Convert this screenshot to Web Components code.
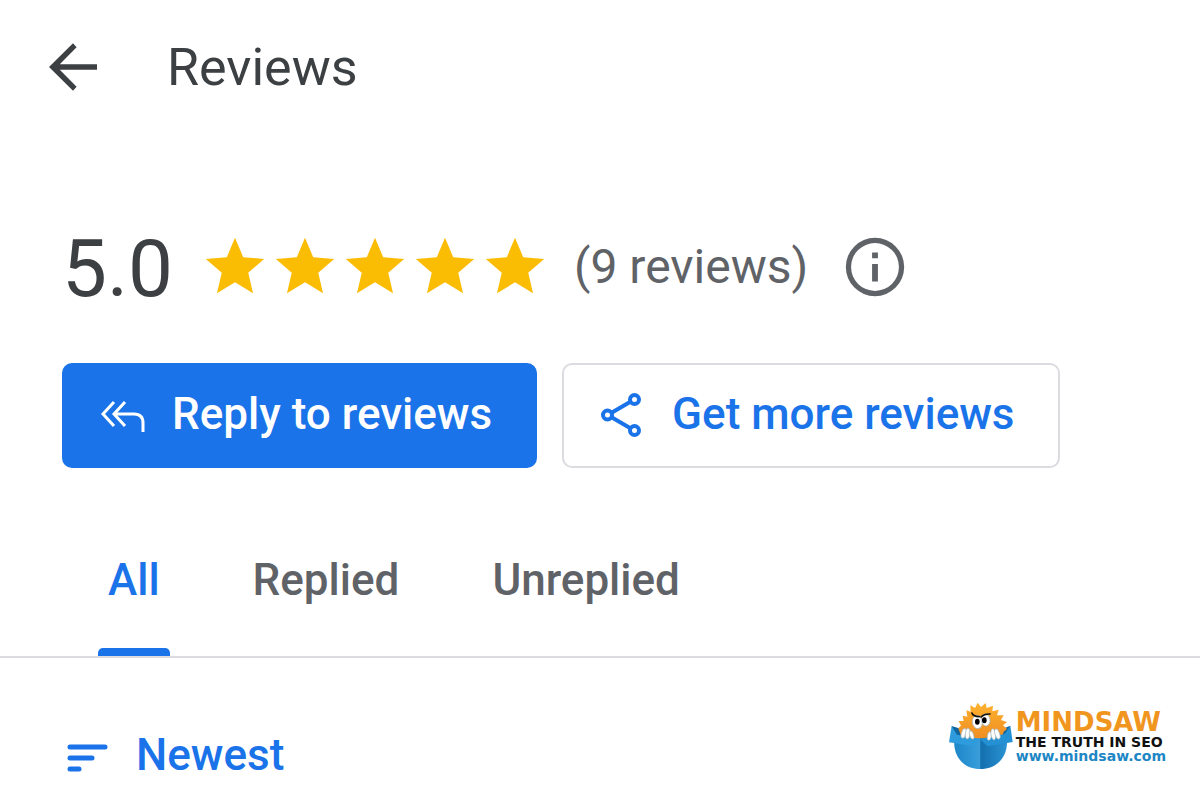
<!DOCTYPE html>
<html lang="en">
<head>
<meta charset="utf-8">
<title>Reviews</title>
<style>
  body {
    --color-primary: #1a73e8;
    --color-text: #3c4043;
    --color-muted: #5f6368;
    --color-line: #dadce0;
    --color-star: #fbbc04;
    --page-inset: 62px;

    margin: 0;
    background: #fff;
    color: var(--color-text);
    font-family: Roboto, "Liberation Sans", sans-serif;
  }
</style>
</head>
<body>
<reviews-app></reviews-app>

<script>
const define = (name, html, setup) => {
  const template = document.createElement('template');
  template.innerHTML = html;

  window.customElements.define(name, class extends HTMLElement {
    constructor() {
      super();
      this.attachShadow({ mode: 'open' });
      this.shadowRoot.appendChild(template.content.cloneNode(true));
    }

    connectedCallback() {
      if (setup) setup(this, this.shadowRoot);
    }
  });
};

define('page-header', `
  <style>
    :host {
      display: flex;
      align-items: center;
      gap: 54px;
      padding: 30px 37px 0;
    }

    button {
      display: block;
      padding: 0;
      border: 0;
      background: none;
      color: inherit;
      cursor: pointer;
    }

    svg {
      display: block;
      width: 72px;
      height: 72px;
    }

    h1 {
      margin: 0;
      padding: 2px 4px 0;
      font-size: 52px;
      font-weight: 400;
      line-height: 72px;
    }
  </style>

  <button type="button" aria-label="Back">
    <svg viewBox="0 0 24 24" fill="currentColor">
      <path d="M20 11.1H7.6l5.6-5.7L12 4.1 4 12l8 7.9 1.2-1.3-5.6-5.7H20z"/>
    </svg>
  </button>
  <h1><slot></slot></h1>
`);

define('star-rating', `
  <style>
    :host {
      display: flex;
      color: var(--color-star);
    }

    svg {
      display: block;
      width: 70px;
      height: 70px;
    }
  </style>
`, (host, root) => {
  const count = Number(host.getAttribute('value'));
  host.setAttribute('role', 'img');
  host.setAttribute('aria-label', `${count} stars`);

  for (let i = 0; i < count; i++) {
    root.innerHTML += `
      <svg viewBox="0 0 24 24" fill="currentColor">
        <path d="M12 17.27 18.18 21l-1.64-7.03L22 9.24l-7.19-.61L12 2 9.19 8.63 2 9.24l5.46 4.73L5.82 21z"/>
      </svg>
    `;
  }
});

define('rating-summary', `
  <style>
    :host {
      display: flex;
      align-items: center;
      padding: 125px var(--page-inset) 0;
    }

    .score {
      padding-top: 4px;
      font-size: 80px;
      line-height: 72px;
    }

    star-rating {
      margin: 0 24px 0 27px;
    }

    .count {
      color: var(--color-muted);
      font-size: 48px;
      line-height: 72px;
    }

    button {
      margin-left: 32px;
      padding: 0;
      border: 0;
      background: none;
      color: var(--color-muted);
      cursor: pointer;
    }

    svg {
      display: block;
      width: 70px;
      height: 70px;
    }
  </style>

  <span class="score"><slot name="score"></slot></span>
  <star-rating value="5"></star-rating>
  <span class="count"><slot name="count"></slot></span>
  <button type="button" aria-label="About ratings">
    <svg viewBox="0 0 24 24" fill="currentColor">
      <path d="M11 11h2v6h-2zm0-4h2v2h-2zM12 2a10 10 0 1 0 0 20 10 10 0 0 0 0-20zm0 18.2a8.2 8.2 0 1 1 0-16.4 8.2 8.2 0 0 1 0 16.4z"/>
    </svg>
  </button>
`);

define('action-button', `
  <style>
    :host {
      display: block;
    }

    button {
      display: flex;
      align-items: center;
      gap: 26px;
      height: 105px;
      padding: 0 43px 4px 36px;
      border: 2px solid var(--color-line);
      border-radius: 10px;
      background: #fff;
      color: var(--color-primary);
      font: 500 44px/48px Roboto, "Liberation Sans", sans-serif;
      white-space: nowrap;
      cursor: pointer;
    }

    :host([primary]) button {
      border-color: var(--color-primary);
      background: var(--color-primary);
      color: #fff;
    }
  </style>

  <button type="button">
    <slot name="icon"></slot>
    <slot></slot>
  </button>
`);

define('review-actions', `
  <style>
    :host {
      display: flex;
      gap: 25px;
      padding: 58px var(--page-inset) 0;
    }

    svg {
      display: block;
      width: 46px;
      height: 46px;
      fill: none;
      stroke: currentColor;
    }
  </style>

  <action-button primary>
    <svg slot="icon" viewBox="0 0 46 46" stroke-width="3">
      <path d="M14 11 3 23l11 12M25 11 14 23l11 12M14 23h20q9 0 9 9v9"/>
    </svg>
    Reply to reviews
  </action-button>
  <action-button>
    <svg slot="icon" viewBox="0 0 46 46" stroke-width="4">
      <path d="M12 21.500 30 11M12 26.500 30 37"/>
      <circle cx="7.500" cy="24" r="4.500"/>
      <circle cx="34.500" cy="8.500" r="4.500"/>
      <circle cx="34.500" cy="39.500" r="4.500"/>
    </svg>
    Get more reviews
  </action-button>
`);

define('review-tabs', `
  <style>
    :host {
      display: flex;
      gap: 73px;
      margin-top: 68px;
      padding: 0 98px;
      border-bottom: 2px solid var(--color-line);
    }

    button {
      padding: 20px 10px 0;
      border: 0;
      background: none;
      color: var(--color-muted);
      font: 500 44px/48px Roboto, "Liberation Sans", sans-serif;
      cursor: pointer;
    }

    button::after {
      content: "";
      display: block;
      height: 8px;
      margin: 44px -10px 0;
      border-radius: 5px 5px 0 0;
    }

    button[aria-selected="true"] {
      color: var(--color-primary);
    }

    button[aria-selected="true"]::after {
      background: var(--color-primary);
    }
  </style>

  <button type="button" role="tab" aria-selected="true">All</button>
  <button type="button" role="tab" aria-selected="false">Replied</button>
  <button type="button" role="tab" aria-selected="false">Unreplied</button>
`, (host, root) => {
  host.setAttribute('role', 'tablist');
  root.addEventListener('click', ({ target }) => {
    if (!target.matches('button')) return;
    root.querySelector('[aria-selected="true"]').setAttribute('aria-selected', 'false');
    target.setAttribute('aria-selected', 'true');
  });
});

define('sort-button', `
  <style>
    :host {
      display: block;
    }

    button {
      display: flex;
      align-items: center;
      gap: 26px;
      padding: 0;
      border: 0;
      background: none;
      color: var(--color-primary);
      font: 500 44px/48px Roboto, "Liberation Sans", sans-serif;
      cursor: pointer;
    }

    svg {
      display: block;
      width: 48px;
      height: 48px;
    }
  </style>

  <button type="button">
    <svg viewBox="0 0 48 48" fill="none" stroke="currentColor" stroke-width="5" stroke-linecap="round">
      <path d="M8 16h35M8 27h22M8 38h9"/>
    </svg>
    <slot></slot>
  </button>
`);

define('mindsaw-logo', `
  <style>
    :host {
      display: block;
      font-family: "DejaVu Sans", sans-serif;
      font-weight: 700;
    }

    a {
      display: flex;
      align-items: center;
      gap: 1px;
      color: inherit;
      text-decoration: none;
    }

    svg {
      display: block;
      width: 68px;
      height: 74px;
    }

    .text {
      display: flex;
      flex-direction: column;
      white-space: nowrap;
    }

    .name {
      color: #f0961e;
      font-size: 26px;
      line-height: 24px;
    }

    .motto {
      color: #111;
      font-size: 14px;
      line-height: 16px;
    }

    .site {
      color: #1d86c4;
      font-size: 14px;
      line-height: 12px;
    }
  </style>

  <a href="#mindsaw">
    <svg viewBox="0 0 204 222">
      <defs>
        <linearGradient id="box" x1="0" x2="1">
          <stop offset="0" stop-color="#1c86c8"/>
          <stop offset=".49" stop-color="#3a9edb"/>
          <stop offset=".5" stop-color="#146fae"/>
          <stop offset="1" stop-color="#2b93d3"/>
        </linearGradient>
        <linearGradient id="saw" x1="0" y1="0" x2="0" y2="1">
          <stop offset="0" stop-color="#fdb22f"/>
          <stop offset="1" stop-color="#ef8b22"/>
        </linearGradient>
      </defs>
      <path fill="#12649f" d="M14 81 50 92H160L190 80 176 122H24z"/>
      <path fill="url(#saw)" d="M40 104 34 88 42 80 35 66 50 66 47 50 61 53 58 34 71 38 70 18 84 27 92 11 102 24 116 12 119 27 138 20 136 37 155 32 150 49 170 49 162 63 180 69 168 79 180 90 170 98 166 116 100 126 44 118z"/>
      <path fill="url(#box)" d="M22 118H180C184 172 152 210 100 210S17 172 22 118z"/>
      <path fill="#2e9cdc" d="M14 81 30 107 98 120 80 142 6 130z"/>
      <path fill="#2391d3" d="M190 80 173 105 98 120 122 142 197 129z"/>
      <g fill="#fff" stroke="#9fb0bb" stroke-width="2">
        <ellipse cx="91" cy="69" rx="15" ry="20" transform="rotate(-8 91 69)"/>
        <ellipse cx="116" cy="63" rx="13" ry="18" transform="rotate(-8 116 63)"/>
        <ellipse cx="50" cy="103" rx="7" ry="15" transform="rotate(15 50 103)"/>
        <ellipse cx="62" cy="104" rx="7" ry="16" transform="rotate(5 62 104)"/>
        <ellipse cx="74" cy="108" rx="6" ry="13" transform="rotate(-18 74 108)"/>
        <ellipse cx="127" cy="111" rx="6" ry="13" transform="rotate(10 127 111)"/>
        <ellipse cx="139" cy="106" rx="7" ry="17" transform="rotate(-8 139 106)"/>
        <ellipse cx="151" cy="105" rx="7" ry="16" transform="rotate(-18 151 105)"/>
      </g>
      <ellipse cx="91" cy="68" rx="7" ry="9"/>
      <ellipse cx="112" cy="64" rx="7" ry="9"/>
      <g fill="none" stroke="#111" stroke-width="5" stroke-linecap="round">
        <path d="M75 42q2 10 22 11M102 54q10-10 27-9"/>
      </g>
    </svg>
    <span class="text">
      <span class="name">MINDSAW</span>
      <span class="motto">THE TRUTH IN SEO</span>
      <span class="site">www.mindsaw.com</span>
    </span>
  </a>
`);

define('reviews-app', `
  <style>
    :host {
      display: block;
    }

    .toolbar {
      display: flex;
      align-items: center;
      justify-content: space-between;
      padding: 35px 34px 0 62px;
    }

    sort-button {
      padding-top: 38px;
    }
  </style>

  <page-header>Reviews</page-header>
  <main>
    <rating-summary>
      <span slot="score">5.0</span>
      <span slot="count">(9 reviews)</span>
    </rating-summary>
    <review-actions></review-actions>
    <review-tabs></review-tabs>
    <div class="toolbar">
      <sort-button>Newest</sort-button>
      <mindsaw-logo></mindsaw-logo>
    </div>
  </main>
`);
</script>
</body>
</html>
